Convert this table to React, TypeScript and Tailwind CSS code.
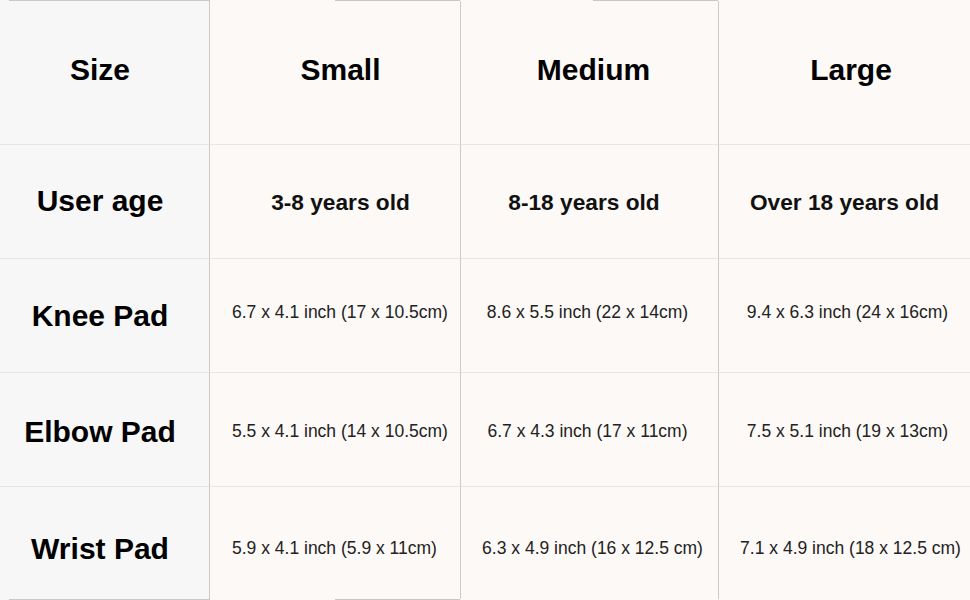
type Cell = { text: string; pad: string };

const header: Cell[] = [
  { text: "Small", pad: "justify-center pl-[11px]" },
  { text: "Medium", pad: "justify-center pl-[8px]" },
  { text: "Large", pad: "justify-center pl-[13px]" },
];

const rows: { label: string; labelPad: string; bold?: boolean; cells: Cell[] }[] = [
  {
    label: "User age",
    labelPad: "pb-[3px]",
    bold: true,
    cells: [
      { text: "3-8 years old", pad: "justify-center pl-[11px] pt-[1px]" },
      { text: "8-18 years old", pad: "justify-center pr-[11px] pt-[1px]" },
      { text: "Over 18 years old", pad: "justify-center pt-[1px]" },
    ],
  },
  {
    label: "Knee Pad",
    labelPad: "",
    cells: [
      { text: "6.7 x 4.1 inch (17 x 10.5cm)", pad: "justify-start pl-[22px] pb-[6px]" },
      { text: "8.6 x 5.5 inch (22 x 14cm)", pad: "justify-center pr-[4px] pb-[6px]" },
      { text: "9.4 x 6.3 inch (24 x 16cm)", pad: "justify-center pl-[6px] pb-[6px]" },
    ],
  },
  {
    label: "Elbow Pad",
    labelPad: "pt-[4px]",
    cells: [
      { text: "5.5 x 4.1 inch (14 x 10.5cm)", pad: "justify-start pl-[22px] pt-[4px]" },
      { text: "6.7 x 4.3 inch (17 x 11cm)", pad: "justify-center pr-[4px] pt-[4px]" },
      { text: "7.5 x 5.1 inch (19 x 13cm)", pad: "justify-center pl-[6px] pt-[4px]" },
    ],
  },
  {
    label: "Wrist Pad",
    labelPad: "pt-[10px]",
    cells: [
      { text: "5.9 x 4.1 inch (5.9 x 11cm)", pad: "justify-start pl-[22px] pt-[10px]" },
      { text: "6.3 x 4.9 inch (16 x 12.5 cm)", pad: "justify-center pl-[6px] pt-[10px]" },
      { text: "7.1 x 4.9 inch (18 x 12.5 cm)", pad: "justify-center pl-[12px] pt-[10px]" },
    ],
  },
];

const valueBorder = ["border-r border-r-[#cbcbcb]", "border-r border-r-[#cbcbcb]", ""];

function Row({ label, labelPad, cells, height, kind, last }: { label: string; labelPad: string; cells: Cell[]; height: string; kind: "header" | "bold" | "plain"; last?: boolean }) {
  const lineB = last ? "" : "border-b";
  return (
    <div className={`grid grid-cols-[210px_251px_258px_251px] ${height}`}>
      <div className={`flex items-center justify-center border-r border-r-[#cbcbcb] border-b-[#e6e4e2] bg-[#f7f7f7] pr-[9px] ${lineB} ${labelPad}`}>
        <span className="text-[30px] font-bold text-black">{label}</span>
      </div>
      {cells.map((cell, i) => (
        <div key={i} className={`flex items-center border-b-[#e8e5e2] bg-[#fcf9f7] ${lineB} ${valueBorder[i]} ${cell.pad}`}>
          {kind === "header" ? (
            <span className="text-[30px] font-bold text-black">{cell.text}</span>
          ) : kind === "bold" ? (
            <span className="text-[22.7px] font-bold text-[#111]">{cell.text}</span>
          ) : (
            <span className="whitespace-nowrap text-[17.5px] text-[#222]">{cell.text}</span>
          )}
        </div>
      ))}
    </div>
  );
}

export default function App() {
  return (
    <div className="flex h-[600px] w-[970px] flex-col overflow-hidden bg-[#fcf9f7] font-['Liberation_Sans',Arial,sans-serif]">
      <div className="flex h-px shrink-0">
        <div className="w-[9px] bg-[#f7f7f7]" />
        <div className="w-[201px] bg-[#c8c8c8]" />
        <div className="w-[125px] bg-[#fcf9f7]" />
        <div className="w-[125px] bg-[#c8c8c8]" />
        <div className="w-[133px] bg-[#fcf9f7]" />
        <div className="w-[125px] bg-[#c8c8c8]" />
        <div className="flex-1 bg-[#fcf9f7]" />
      </div>
      <Row label="Size" labelPad="pb-[6px]" cells={header.map((c) => ({ ...c, pad: `${c.pad} pb-[6px]` }))} height="h-[144px]" kind="header" />
      {rows.map((row, i) => (
        <Row
          key={row.label}
          label={row.label}
          labelPad={row.labelPad}
          cells={row.cells}
          kind={row.bold ? "bold" : "plain"}
          height={i === rows.length - 1 ? "h-[112px]" : "h-[114px]"}
          last={i === rows.length - 1}
        />
      ))}
      <div className="flex h-px shrink-0">
        <div className="w-[9px] bg-[#f7f7f7]" />
        <div className="w-[201px] bg-[#c8c8c8]" />
        <div className="w-[125px] bg-[#fcf9f7]" />
        <div className="w-[125px] bg-[#c8c8c8]" />
        <div className="w-[9px] bg-[#fcf9f7]" />
        <div className="flex-1 bg-[#fcf9f7]" />
      </div>
    </div>
  );
}
